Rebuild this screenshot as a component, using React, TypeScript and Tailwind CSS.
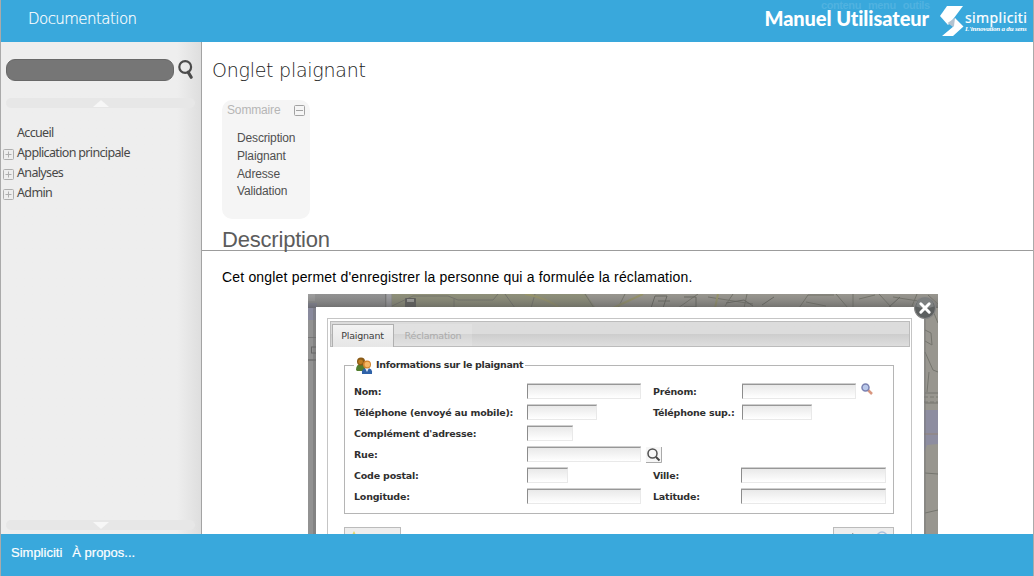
import React from 'react';

const menu = ['Accueil', 'Application principale', 'Analyses', 'Admin'];
const summary = ['Description', 'Plaignant', 'Adresse', 'Validation'];

function ToggleBox({ plus, className = '' }: { plus?: boolean; className?: string }) {
  return (
    <svg className={`h-[11px] w-[11px] shrink-0 ${className}`} viewBox="0 0 11 11" fill="none" stroke={plus ? '#aeaeae' : '#a2a2a2'}>
      <rect x=".5" y=".5" width="10" height="10" rx="1" />
      <path d={plus ? 'M2.5 5.5h6M5.5 2.5v6' : 'M2 5.5h7'} />
    </svg>
  );
}

function ScrollBar({ down }: { down?: boolean }) {
  return (
    <div className="ml-[5px] flex h-[10px] w-[189px] items-center justify-center rounded-full bg-[#e7e7e7]">
      <svg className="h-[7px] w-[16px]" viewBox="0 0 16 7" fill="#f7f7f7">
        <path d={down ? 'M0 0h16L8 7z' : 'M0 7h16L8 0z'} />
      </svg>
    </div>
  );
}

function Label({ children }: { children: React.ReactNode }) {
  return <span className="pt-px whitespace-nowrap">{children}</span>;
}

function Field({ className }: { className: string }) {
  return (
    <div
      className={`h-[15px] border border-t-[#979797] border-r-[#e9e9e9] border-b-[#e9e9e9] border-l-[#8c8c8c] bg-linear-to-b from-[#e9e9e9] to-white shadow-[0_-1px_0_#cfcfcf] ${className}`}
    />
  );
}

function Sidebar() {
  return (
    <aside className="flex w-[201px] shrink-0 flex-col border-r border-[#a3a3a3] bg-linear-to-r from-[#eeeeee] from-88% to-[#dedede]">
      <div className="flex h-[61px] pt-[17px] pl-[5px]">
        <div className="h-[22px] w-[168px] rounded-[9px] border border-[#686868] bg-[#767676]" />
        <svg className="mt-px ml-[4px] h-[20px] w-[16px]" viewBox="0 0 16 20" fill="none" stroke="#4b4b4b">
          <circle cx="7.2" cy="7" r="5.9" strokeWidth="2.2" />
          <path d="M10.2 12.2l3 5" strokeWidth="3.2" strokeLinecap="round" />
        </svg>
      </div>
      <div className="-mt-[5px]">
        <ScrollBar />
      </div>
      <nav className="mt-[14px] flex-1 pl-[2px] text-[12.5px] leading-5 tracking-[-0.65px] text-[#484848]">
        {menu.map((item, i) => (
          <div key={item} className="flex h-5 items-center">
            {i === 0 ? <span className="w-[11px]" /> : <ToggleBox plus className="mt-[5px]" />}
            <span className="mt-[2px] ml-[3px] font-['Noto_Sans',sans-serif]">{item}</span>
          </div>
        ))}
      </nav>
      <div className="pb-1">
        <ScrollBar down />
      </div>
    </aside>
  );
}

function MapBackdrop() {
  return (
    <svg className="absolute inset-0 h-full w-full" viewBox="0 0 630 240" fill="none">
      <defs>
        <linearGradient id="shade" x1="0" y1="0" x2="0" y2="1">
          <stop offset="0" stopColor="#777" stopOpacity="0" />
          <stop offset="1" stopColor="#555" stopOpacity=".6" />
        </linearGradient>
      </defs>
      <path fill="#98968f" d="M0 0h630v240H0z" />
      <path fill="#929292" d="M0 0h84v240H0z" />
      <path fill="#9d9d9d" d="M0 0h7v7H0z" />
      <path fill="#898a9d" d="M0 9h9v17H0z" />
      <path fill="#777" d="M0 43h9v1H0zM0 65h9v2H0zM77 0h1v14h-1z" />
      <path fill="#a0a0a4" d="M79 0h4v14h-4z" />
      <path fill="#8f9079" d="M84 0h194l10 14H84z" />
      <path stroke="#74746a" d="M84 12L105 2h35l10 4h35L190 0M146 14V5M197 0l10 14M227 0l-4 14M277 0l9 14M310 14l7-14M370 14l20-14M400 3l45 7M425 0l-8 12M436 14l3-14M491 14l9-13 26 0M498 8l20 4M528 0l12 14M545 0v13M551 5l16-4M571 0l13 14M585 3l25 4M609 0l-5 12" />
      <path stroke="#98956a" strokeWidth="2" d="M217 0q22 4 35 14M305 14l30-14M410 0l-3 14" />
      <path stroke="#66665f" d="M343 14l4-12h12l-4 12M350 7h12M376 3h12v10h-12M418 9l18-3 9 6M454 11l12-8M580 14l12-11" />
      <rect x="97" y="4" width="11" height="10" rx="1" fill="#5b5b58" />
      <path fill="#a5a5a0" d="M99 5h7v3h-7z" />
      <path fill="url(#shade)" d="M0 0h630v14H0z" />
      <path fill="#8d8da0" d="M616 116h14v34l-11 1-3 7z" />
      <path stroke="#75756e" d="M617 36l6 3 1 12-7-4M617 58l8 18 5 2M621 78l-2 20M617 99h13M617 109h13M617 179l13 1M617 219l13-3M621 7l9 22M620 1l10 9" />
      <path stroke="#7b7a72" strokeDasharray="4 2" d="M616 103h14M616 108h14" />
      <path stroke="#928376" d="M616 140h14" />
      <path fill="#777" d="M614 14h4v226h-4z" opacity=".45" />
      <path fill="#6f6f6f" d="M5 14h4v226H5z" opacity=".4" />
      <rect x="3.500" y="53" width="5" height="6" stroke="#666" />
    </svg>
  );
}

function PeopleIcon() {
  return (
    <svg className="h-[17px] w-[18px]" viewBox="0 0 18 17">
      <path fill="#527e2f" d="M1 13q0-6 5-6 4 0 5 5v2H2z" />
      <circle cx="6" cy="4.500" r="4" fill="#8a5a16" />
      <circle cx="5.600" cy="4.800" r="2.400" fill="#bc7c20" />
      <path fill="#2f62a8" d="M7 17q-1-6 5-6t5 6z" />
      <path fill="#e8eef8" d="M10 11l2 4 2-4z" />
      <circle cx="12" cy="7.500" r="4" fill="#d2842f" />
      <circle cx="12.300" cy="7.500" r="2.700" fill="#f5b865" />
    </svg>
  );
}

function FormScreenshot() {
  return (
    <div className="relative ml-[106px] h-[240px] w-[630px] overflow-hidden font-['DejaVu_Sans',sans-serif]">
      <MapBackdrop />
      <div className="relative mt-[13px] ml-2 h-[240px] w-[608px] bg-white pt-[11px] pl-[11px]">
        <div className="h-[240px] w-[585px] border border-[#c5c5c5] p-[2px]">
          <div className="flex h-[26px] w-[580px] items-start border border-[#bcbcbc] bg-linear-to-b from-[#dcdcdc] from-50% via-[#cdcdcd] via-50% to-[#dedede] pt-[2px] pl-px text-[9.5px] tracking-[-0.2px]">
            <div className="flex h-[23px] w-[62px] items-center justify-center border border-b-0 border-[#b0b0b0] bg-linear-to-b from-[#f3f3f3] to-[#e6e6e6] pr-px text-[#3e3e3e]">Plaignant</div>
            <div className="flex h-[22px] w-[78px] items-center justify-center bg-white/15 pt-[2px] text-[#ababab]">Réclamation</div>
          </div>
          <fieldset className="mt-[10px] ml-[14px] h-[157px] w-[550px] border border-[#b5b5b5] pl-[9px] text-[9.5px] font-bold tracking-[-0.2px] text-[#2f2f2f]">
            <legend className="flex h-[17px] items-center gap-[3px] pr-[2px] pl-px tracking-[-0.32px] whitespace-nowrap">
              <PeopleIcon />
              Informations sur le plaignant
            </legend>
            <div className="mt-[7px] grid auto-rows-[21px] grid-cols-[173px_126px_88px_1fr] items-center">
              <Label>Nom:</Label>
              <Field className="w-[114px]" />
              <Label>Prénom:</Label>
              <div className="flex items-center">
                <Field className="ml-px w-[114px]" />
                <svg className="-mt-[5px] ml-[5px] h-[12px] w-[12px]" viewBox="0 0 12 12" fill="none">
                  <path d="M7 7l4 4" stroke="#d9977f" strokeWidth="2.500" />
                  <circle cx="4.500" cy="4.500" r="3.500" fill="#b9c8ea" stroke="#7b82b1" strokeWidth="1.500" />
                </svg>
              </div>
              <Label>Téléphone (envoyé au mobile):</Label>
              <Field className="w-[70px]" />
              <Label>Téléphone sup.:</Label>
              <Field className="ml-px w-[70px]" />
              <Label>Complément d'adresse:</Label>
              <Field className="col-span-3 w-[46px]" />
              <Label>Rue:</Label>
              <div className="col-span-3 flex items-center">
                <Field className="w-[114px]" />
                <svg className="ml-[5px] h-[16px] w-[16px]" viewBox="0 0 16 16" fill="none">
                  <path fill="#f6f6f6" d="M0 0h16v16H0z" />
                  <path d="M0 15.500h15.500V0" stroke="#aaa" />
                  <circle cx="6.500" cy="6.500" r="4.500" stroke="#505050" strokeWidth="1.500" />
                  <path d="M10 10l3.500 3.500" stroke="#444" strokeWidth="2" />
                </svg>
              </div>
              <Label>Code postal:</Label>
              <Field className="w-[41px]" />
              <Label>Ville:</Label>
              <Field className="w-[145px]" />
              <Label>Longitude:</Label>
              <Field className="w-[114px]" />
              <Label>Latitude:</Label>
              <Field className="w-[145px]" />
            </div>
          </fieldset>
          <div className="mt-[13px] ml-[14px] flex w-[550px] justify-between">
            <div className="h-[20px] w-[57px] border border-[#bbb] bg-[#ededed] pl-[5px]">
              <svg className="mt-[3px] h-[8px] w-[8px]" viewBox="0 0 8 8">
                <path fill="#e1d56a" d="M4 0l1.500 3H8L5.500 5 7 8H1l1.500-3L0 3h2.500z" />
              </svg>
            </div>
            <div className="flex h-[20px] w-[61px] justify-end border border-[#bbb] bg-[#ededed] pr-[5px]">
              <svg className="mt-[3px] h-[12px] w-[40px]" viewBox="0 0 40 12" fill="none">
                <path stroke="#888" d="M4 4l1-2" />
                <circle cx="34" cy="6" r="5" stroke="#a9bfdc" strokeWidth="1.500" />
              </svg>
            </div>
          </div>
        </div>
      </div>
      <svg className="absolute top-[3px] left-[606px] h-[22px] w-[22px]" viewBox="0 0 21 21">
        <circle cx="10.500" cy="10.500" r="10" fill="#5d6060" stroke="#858585" />
        <path d="M2 9a8.500 8.500 0 0 1 17 0q-8 3-17 0" fill="#7d8080" />
        <path d="M6.500 6.500l8 8m0-8l-8 8" stroke="#fff" strokeWidth="2.800" strokeLinecap="round" />
      </svg>
    </div>
  );
}

export default function App() {
  return (
    <div className="flex h-[576px] w-[1034px] flex-col overflow-hidden border-x border-[#aaaaaa] bg-white font-['Liberation_Sans',Arial,sans-serif]">
      <header className="relative flex h-[42px] shrink-0 justify-between bg-[#39a8dc] text-white">
        <div className="mt-[7px] ml-[27px] font-['DejaVu_Sans',sans-serif] text-[15px] leading-6 font-extralight tracking-[-0.55px] [-webkit-text-stroke:0.2px_white]">Documentation</div>
        <div className="absolute top-0 left-[820px] flex gap-[7px] text-[11px] leading-[10px] font-bold tracking-[-0.4px] text-[#50b2e0]">
          <span>contenu</span>
          <span>menu</span>
          <span>outils</span>
        </div>
        <div className="relative flex pr-[6px]">
          <h1 className="mt-[4px] font-['Lato',sans-serif] text-[20px] leading-7 font-black tracking-[-0.08px] whitespace-nowrap">Manuel Utilisateur</h1>
          <svg className="mt-[6px] ml-[11px] h-[30px] w-[24px]" viewBox="0 0 24 30">
            <path fill="#fff" d="M7 0h16l-9 12-6 7L0 10z" />
            <path fill="#b4c3d0" d="M7.500 17l7.500-5 2 5-4 4z" />
            <path fill="#fff" d="M15 12l8.500 8.500L13 30H2l12-10z" />
          </svg>
          <div className="mt-[10px] ml-[1px] w-[62px] whitespace-nowrap">
            <div className="font-['Noto_Sans',sans-serif] text-[14px] leading-[15px] tracking-[0.4px] [-webkit-text-stroke:0.2px_white]">simpliciti</div>
            <div className="mt-px font-['Liberation_Serif',serif] text-[7px] leading-[7px] font-bold tracking-[-0.2px] italic">L'innovation a du sens</div>
          </div>
        </div>
      </header>
      <div className="flex min-h-0 flex-1">
        <Sidebar />
        <main className="min-w-0 flex-1 overflow-hidden">
          <h2 className="mt-[14px] ml-[10px] font-['DejaVu_Sans',sans-serif] text-[19px] leading-7 font-extralight tracking-[-0.25px] text-[#222]">Onglet plaignant</h2>
          <section className="mt-[16px] ml-5 h-[119px] w-[88px] rounded-[10px] bg-[#f5f5f5] text-[12px] tracking-[-0.15px] text-[#505050]">
            <div className="flex h-[20px] items-center justify-between pr-[5px] pl-[5px] text-[#b5b5b5]">
              <span>Sommaire</span>
              <ToggleBox />
            </div>
            <div className="mt-[10px] ml-[15px] leading-[17.8px]">
              {summary.map((s) => (
                <div key={s}>{s}</div>
              ))}
            </div>
          </section>
          <h3 className="mt-[8px] h-[24px] border-b border-[#9c9c9c] pl-5 text-[22px] leading-[25px] tracking-[-0.2px] text-[#5c5c5c]">Description</h3>
          <p className="mt-[16px] ml-5 h-[27px] text-[14px] leading-5 tracking-[0.18px] text-black">Cet onglet permet d'enregistrer la personne qui a formulée la réclamation.</p>
          <FormScreenshot />
        </main>
      </div>
      <footer className="flex h-[42px] shrink-0 gap-[10px] bg-[#39a8dc] pt-[10px] pl-[10px] text-[13px] leading-[18px] text-white [-webkit-text-stroke:0.2px_white]">
        <span>Simpliciti</span>
        <span>À propos...</span>
      </footer>
    </div>
  );
}
